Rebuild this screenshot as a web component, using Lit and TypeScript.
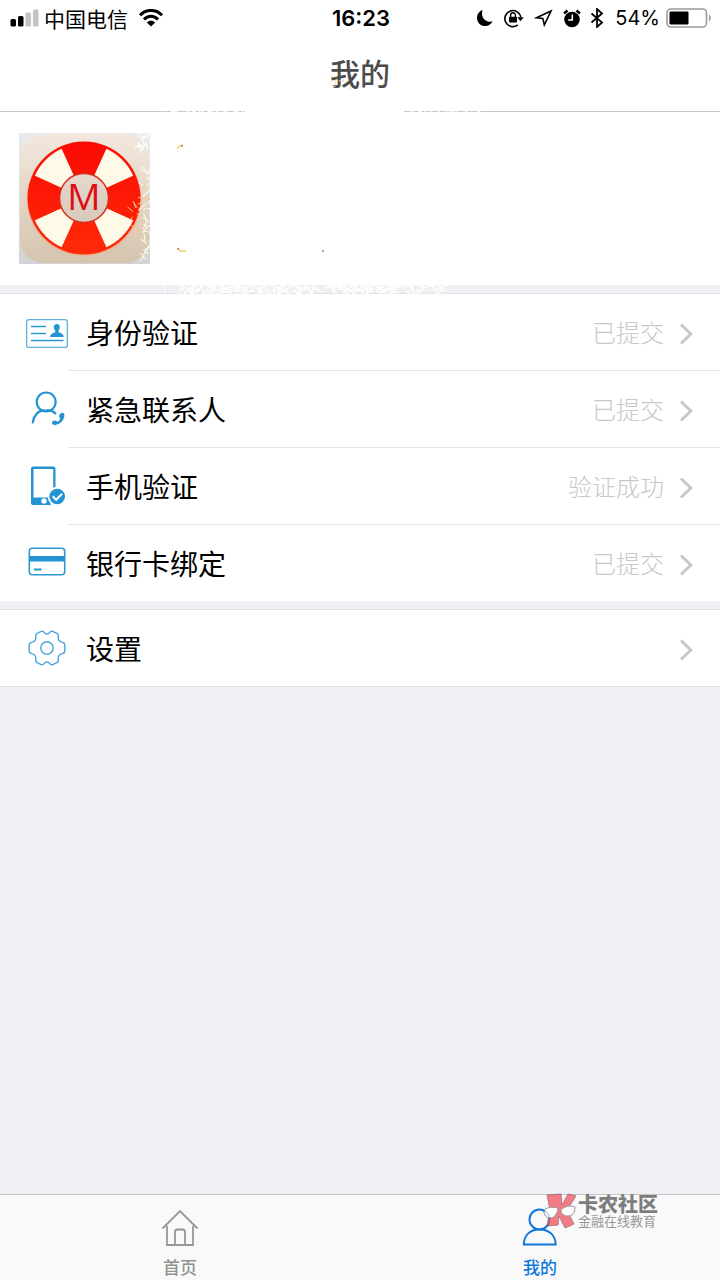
import { LitElement, html, svg, css } from "lit";
import { customElement, property } from "lit/decorators.js";

const icons: Record<string, unknown> = {
  identity: svg`
    <g fill="none" stroke="#2f97d0">
      <rect x="4.6" y="9.6" width="40.8" height="27.8" rx="2.5" stroke-width="1.3" stroke="#5fb1de"/>
      <path d="M9 16.500h15M9 23.500h15M9 30.500h32.500" stroke-width="1.6"/>
    </g>
    <path fill="#2493d1" d="M34.800 14c2 0 3.100 1.500 3 3.500-.1 1.400-.7 2.500-1.300 3.100v1.600c2.400.9 5.200 1.300 5.200 4.800H28.200c0-3.500 2.700-3.900 5-4.800v-1.600c-.7-.6-1.300-1.700-1.400-3.100-.1-2 1-3.500 3-3.500z"/>`,
  contact: svg`
    <g fill="none" stroke="#2493d1" stroke-width="2.200" stroke-linecap="round">
      <circle cx="24.200" cy="15" r="9.500"/>
      <path d="M10.800 35.500c.7-6.500 5-11.500 10.600-12.100M21.400 24c4.500-1.200 9.600-.5 12 2.500"/>
    </g>
    <path fill="#2493d1" d="M39.500 26c2.300-.6 3.100.9 2.900 2.900-.7 4.900-4.400 8.200-9.200 9-2.100.3-3.500-.9-3.200-2.500.4-1.900 3.200-2.600 4.600-1.300l.6.9c1.700-.8 2.700-2 3.100-3.700l-.9-.9c-.9-1.400.3-3.900 2.100-4.400z"/>`,
  phone: svg`
    <path fill="#2493d1" fill-rule="evenodd" d="M11 2.500h20.500a2 2 0 0 1 2 2v19h-2.300V5H11.500v29.500h15.200l2 6.500H11a2 2 0 0 1-2-2V4.500a2 2 0 0 1 2-2z"/>
    <path fill="#2493d1" d="M10 33.500h17l2 7.500H11z"/>
    <circle cx="22" cy="37" r="2.700" fill="#fff"/>
    <circle cx="35.200" cy="32.500" r="9.500" fill="#fff"/>
    <circle cx="35.200" cy="32.500" r="7.800" fill="#2493d1"/>
    <path d="M30.700 32.300l3.400 3.500 6-6" fill="none" stroke="#fff" stroke-width="2"/>`,
  card: svg`
    <rect x="7.300" y="7.200" width="35.400" height="26.500" rx="3" fill="none" stroke="#2f97d0" stroke-width="1.600"/>
    <path d="M7 15h36v5.500H7zM12 27.500h7.500v2H12z" fill="#2493d1"/>`,
  settings: svg`
    <g fill="none" stroke="#4aa6d8" stroke-width="1.400" stroke-linejoin="round">
      <circle cx="25" cy="22" r="6.200"/>
      <path d="M18.700 5.600c1.800-.9 2.900-.2 3.700 1 1.300 1.900 3.900 1.900 5.200 0 .8-1.200 1.900-1.900 3.700-1l3.600 1.700c1.500.8 1.600 2 1.300 3.400-.4 2.800 1 5.400 4 5.700 1.500.1 2.300.9 2.500 2.400.3 2.200.3 4.200 0 6.400-.2 1.500-1 2.300-2.500 2.400-3 .3-4.400 2.900-4 5.700.3 1.400.2 2.600-1.300 3.400l-3.600 1.700c-1.800.9-2.900.2-3.700-1-1.300-1.900-3.900-1.900-5.200 0-.8 1.200-1.900 1.900-3.700 1l-3.600-1.700c-1.500-.8-1.600-2-1.300-3.400.4-2.800-1-5.400-4-5.700-1.500-.1-2.300-.9-2.500-2.400-.3-2.200-.3-4.200 0-6.400.2-1.500 1-2.300 2.500-2.400 3-.3 4.400-2.900 4-5.700-.3-1.400-.2-2.600 1.300-3.400z"/>
    </g>`,
};

/** Fine burst of strokes: repeatable, so that every render draws the same sparks. */
function sparks(count: number, x0: number, x1: number, y0: number, y1: number, size: number, seed: number) {
  let s = seed;
  const next = () => (s = (s * 16807) % 2147483647) / 2147483647;
  let d = "";
  for (let i = 0; i < count; i++) {
    const x = x0 + next() * (x1 - x0);
    const y = y0 + next() * (y1 - y0);
    const dx = (next() - 0.5) * size * 1.6;
    const dy = (next() - 0.5) * size * 1.6;
    d += `M${x.toFixed(1)} ${y.toFixed(1)}l${dx.toFixed(1)} ${dy.toFixed(1)}`;
  }
  return d;
}

@customElement("list-row")
class ListRow extends LitElement {
  @property() icon = "";
  @property() label = "";
  @property() value = "";

  static styles = css`
    :host { display: block; }
    .row {
      display: flex; align-items: center; box-sizing: border-box;
      width: 100%; height: 76px; padding: 0 26px 0 22px;
      border: 0; background: #fff; color: #000;
      font: inherit; text-align: left; cursor: pointer;
    }
    .icon { width: 50px; height: 44px; flex: none; margin-right: 14px; }
    .label { flex: 1; font-size: 28px; line-height: 40px; }
    .value { font-size: 24px; line-height: 36px; font-weight: 300; color: #c8c8c8; }
    .chevron { width: 16px; height: 24px; flex: none; margin-left: 14px; margin-top: 4px; }
  `;

  render() {
    return html`
      <button class="row" type="button">
        <svg class="icon" viewBox="0 0 50 44" aria-hidden="true">${icons[this.icon]}</svg>
        <span class="label">${this.label}</span>
        <span class="value">${this.value}</span>
        <svg class="chevron" viewBox="0 0 16 24" aria-hidden="true">
          <path d="M3 2.500L12.800 12 3 21.500" fill="none" stroke="#c7c7cc" stroke-width="3"/>
        </svg>
      </button>`;
  }
}

@customElement("status-bar")
class StatusBar extends LitElement {
  static styles = css`
    :host {
      display: grid; grid-template-columns: 1fr auto 1fr; align-items: center;
      height: 36px; padding: 0 8px 0 10px; color: #000;
    }
    .side { display: flex; align-items: center; }
    .right { justify-content: flex-end; }
    .carrier { font-size: 21px; line-height: 30px; margin: 0 10px 0 5px; }
    .time { font: 600 22px/30px Inter, sans-serif; }
    .percent { font: 400 20px/30px Inter, sans-serif; margin: 0 6px 0 11px; }
    svg { display: block; flex: none; }
    .gap { margin-left: 9px; }
  `;

  render() {
    return html`
      <div class="side">
        <svg width="29" height="18" viewBox="0 0 29 18" aria-hidden="true">
          <rect x="0.500" y="10" width="5.500" height="7.500" rx="1.500"/>
          <rect x="8" y="7" width="5.500" height="10.500" rx="1.500"/>
          <rect x="15.500" y="3.500" width="5.500" height="14" rx="1.500" fill="#c4c4c4"/>
          <rect x="23" y="0.500" width="5.500" height="17" rx="1.500" fill="#c4c4c4"/>
        </svg>
        <span class="carrier">中国电信</span>
        <svg width="26" height="18" viewBox="0 0 26 18" aria-hidden="true">
          <g fill="none" stroke="#000" stroke-width="3">
            <path d="M2 6.300C8-.2 18-.2 24 6.300"/>
            <path d="M6 10.500c4-4.300 10-4.300 14 0"/>
          </g>
          <path d="M8.800 13.500c2.500-2.300 5.900-2.300 8.400 0L13 17.500z"/>
        </svg>
      </div>
      <span class="time">16:23</span>
      <div class="side right">
        <svg width="18" height="18" viewBox="0 0 18 18" aria-hidden="true">
          <path d="M6.600.8C3 2.500 1 5 1 8.700c0 4.700 3.500 8.300 8.200 8.300 3.300 0 6-1.700 7.300-4.800C10.500 14.300 4 9.200 6.600.8z"/>
        </svg>
        <svg class="gap" width="22" height="20" viewBox="0 0 22 20" aria-hidden="true">
          <path d="M14.800 16.900a8 8 0 1 1 3-7.400" fill="none" stroke="#000" stroke-width="1.600"/>
          <path d="M14.300 9.200h6.400l-3.200 4z"/>
          <rect x="6" y="8.800" width="8" height="5.800" rx=".8"/>
          <path d="M7.600 9V7.200a2.400 2.400 0 0 1 4.800 0V9" fill="none" stroke="#000" stroke-width="1.400"/>
        </svg>
        <svg class="gap" width="20" height="18" viewBox="0 0 20 18" aria-hidden="true">
          <path d="M17 2L2.500 8.800l6.300.6 1.500 6.500z" fill="none" stroke="#000" stroke-width="1.600" stroke-linejoin="miter"/>
        </svg>
        <svg class="gap" width="18" height="19" viewBox="0 0 18 19" aria-hidden="true">
          <circle cx="9" cy="10.500" r="7.800"/>
          <path d="M1 4.500L4.500 1.500M17 4.500L13.500 1.500" stroke="#000" stroke-width="2.400"/>
          <path d="M9.300 5.500V11H5.200" fill="none" stroke="#fff" stroke-width="1.500"/>
        </svg>
        <svg class="gap" width="14" height="20" viewBox="0 0 14 20" aria-hidden="true">
          <path d="M1.500 5.500l10.500 9-5 4.500V1l5 4.500-10.500 9" fill="none" stroke="#000" stroke-width="1.800"/>
        </svg>
        <span class="percent">54%</span>
        <svg width="46" height="20" viewBox="0 0 46 20" aria-hidden="true">
          <rect x="1" y="1" width="39.500" height="18" rx="4" fill="none" stroke="#9b9b9b" stroke-width="1.600"/>
          <rect x="3.500" y="3.500" width="19" height="13" rx="1"/>
          <path d="M43 6.500c2.400 1.200 2.400 5.800 0 7z" fill="#9b9b9b"/>
        </svg>
      </div>`;
  }
}

@customElement("app-root")
class AppRoot extends LitElement {
  static styles = css`
    :host {
      display: flex; flex-direction: column; min-height: 100vh; background: #efeff4;
      font-family: "Noto Sans CJK SC", sans-serif; color: #000;
    }
    .top { background: #fff; border-bottom: 1px solid #c8c8c8; }
    .title {
      margin: 0; height: 75px; text-align: center; color: #4b4b4b;
      font-size: 30px; line-height: 72px; font-weight: 500;
    }
    .profile {
      position: relative; display: flex; align-items: center;
      box-sizing: border-box; height: 173px; padding: 0 19px; background: #fff;
    }
    .avatar { display: block; width: 131px; height: 131px; }
    .letter { font: 37px "Open Sans", sans-serif; }
    .glitter {
      position: absolute; left: 0; top: -40px; width: 520px; height: 230px; pointer-events: none;
    }
    .band { height: 8px; border-bottom: 1px solid #e2e2e5; background: #efeff4; }
    .list { margin: 0; padding: 0; list-style: none; background: #fff; }
    .item + .item::before { content: ""; display: block; height: 1px; margin-left: 68px; background: #e4e4e6; }
    .line { height: 1px; background: #e2e2e5; }
    .fill { flex: 1; }
    .tabs {
      position: relative; display: flex; background: #f9f9f9; border-top: 1px solid #c4c4c8; height: 85px;
    }
    .tab {
      flex: 1; display: flex; flex-direction: column; align-items: center;
      padding-top: 12px; color: #929292; text-decoration: none;
      font-size: 17px; line-height: 24px; font-weight: 500;
    }
    .tab svg { display: block; width: 40px; height: 42px; margin-bottom: 6px; }
    .active { color: #1279dc; }
    .mark { position: absolute; right: 62px; top: -2px; display: flex; gap: 1px; opacity: 0.75; color: #555; }
    .mark svg { width: 34px; height: 36px; }
    .name { font-size: 20px; line-height: 20px; font-weight: 900; }
    .sub { font-size: 13px; line-height: 14px; color: #777; }
    .words { display: flex; flex-direction: column; padding-top: 1px; }
  `;

  private account = [
    { icon: "identity", label: "身份验证", value: "已提交" },
    { icon: "contact", label: "紧急联系人", value: "已提交" },
    { icon: "phone", label: "手机验证", value: "验证成功" },
    { icon: "card", label: "银行卡绑定", value: "已提交" },
  ];

  private renderAvatar() {
    return html`
      <svg class="avatar" viewBox="0 0 131 131" role="img" aria-label="M">
        <defs>
          <linearGradient id="plate" x2="0" y2="1"><stop stop-color="#f3e8de"/><stop offset="1" stop-color="#d5c4ae"/></linearGradient>
          <linearGradient id="red" x2="0" y2="1"><stop stop-color="#fb0a04"/><stop offset="1" stop-color="#ff2b08"/></linearGradient>
          <linearGradient id="edge" x2="0" y2="1"><stop stop-color="#e9eaec"/><stop offset="1" stop-color="#d3d3d6"/></linearGradient>
          <linearGradient id="hub" x2="0" y2="1"><stop stop-color="#e6d8cc"/><stop offset="1" stop-color="#d6cabb"/></linearGradient>
          <clipPath id="ring"><circle cx="65" cy="65" r="54"/></clipPath>
        </defs>
        <rect width="131" height="131" fill="url(#edge)"/>
        <rect x="1" y="1" width="129" height="129" rx="24" fill="url(#plate)"/>
        <circle cx="65" cy="66" r="57.500" fill="#efb08c" opacity=".7"/>
        <circle cx="65" cy="65" r="56.500" fill="url(#red)"/>
        <path clip-path="url(#ring)" fill="#fff9e7"
          d="M65 65L35-1-1 35zM65 65L95-1 131 35zM65 65L35 131-1 95zM65 65L95 131 131 95z"/>
        <circle cx="65" cy="65" r="24.500" fill="url(#hub)" stroke="#d8301c" stroke-width="1.500"/>
        <text class="letter" x="65" y="77" text-anchor="middle" fill="#e00d15">M</text>
        <path d="${sparks(34, 123, 131, 40, 125, 11, 91)}" stroke="#fff6e8" stroke-width="1.100"/>
        <path d="${sparks(12, 112, 127, 52, 98, 11, 37)}" stroke="#f7c78c" stroke-width="1"/>
        <path d="${sparks(22, 120, 131, 0, 20, 8, 51)}" stroke="#fff" stroke-width="1.200"/>
      </svg>`;
  }

  render() {
    return html`
      <header class="top">
        <status-bar></status-bar>
        <h1 class="title">我的</h1>
      </header>
      <main>
        <section class="profile">
          ${this.renderAvatar()}
          <svg class="glitter" viewBox="0 0 520 230" aria-hidden="true">
            <path d="M245 39.500H404" stroke="#fff" stroke-width="3"/>
            <path d="${sparks(34, 165, 246, 38, 41, 5, 11)}${sparks(22, 404, 480, 38, 41, 5, 23)}" stroke="#fff" stroke-width="1.200"/>
            <path d="${sparks(12, 334, 386, 4, 14, 5, 77)}" stroke="#ecd3ad" stroke-width="1"/>
            <path d="M177 77l2-3 4-1M178 176l2 3h6" fill="none" stroke="#e8cf7c" stroke-width="1.400"/>
            <path d="M181 74h2M177 177h2M322 179h2" stroke="#a98a52" stroke-width="1.500"/>
            <path d="${sparks(150, 180, 318, 213, 222, 11, 5)}${sparks(110, 332, 442, 213, 222, 11, 8)}M165 213v8" stroke="#fff" stroke-width="1.100"/>
          </svg>
        </section>
        <div class="band"></div>
        <ul class="list">
          ${this.account.map((r) => html`
            <li class="item"><list-row icon=${r.icon} label=${r.label} value=${r.value}></list-row></li>`)}
        </ul>
        <div class="band"></div>
        <ul class="list">
          <li class="item"><list-row icon="settings" label="设置"></list-row></li>
        </ul>
        <div class="line"></div>
      </main>
      <div class="fill"></div>
      <nav class="tabs">
        <a class="tab" href="#home">
          <svg viewBox="0 0 40 42" fill="none" stroke="#979797" stroke-width="1.800" aria-hidden="true">
            <path d="M2.500 21.500L20 4l17.500 17.500M7 19v19h26V19M15 38V25a2.500 2.500 0 0 1 2.500-2.500h5A2.500 2.500 0 0 1 25 25v13"/>
          </svg>
          <span>首页</span>
        </a>
        <a class="tab active" href="#mine" aria-current="page">
          <svg viewBox="0 0 40 42" fill="none" stroke="#1279dc" stroke-width="2" aria-hidden="true">
            <circle cx="19.500" cy="12.500" r="10"/>
            <path d="M3.800 37.500C4 28.500 9.500 22.500 19.500 22.500S35.500 28.500 35.700 37.500z"/>
          </svg>
          <span>我的</span>
        </a>
        <div class="mark">
          <svg viewBox="0 0 34 36" aria-hidden="true">
            <path fill="#f0525f" stroke="#8d4048" stroke-width=".8"
              d="M4 2l14-1 1 11 6-11 8 2-9 14 7 14-9 4-6-12-1 9-11 1 3-16z"/>
            <path fill="#fff" stroke="#777" stroke-width="1"
              d="M1 18c1-3 7-5 14-3-1 7-4 10-8 10-4 0-6-3-6-7zM18 17c4-4 9-5 14-3 0 6-3 9-7 9-4 0-7-2-7-6z"/>
          </svg>
          <div class="words">
            <span class="name">卡农社区</span>
            <span class="sub">金融在线教育</span>
          </div>
        </div>
      </nav>`;
  }
}
